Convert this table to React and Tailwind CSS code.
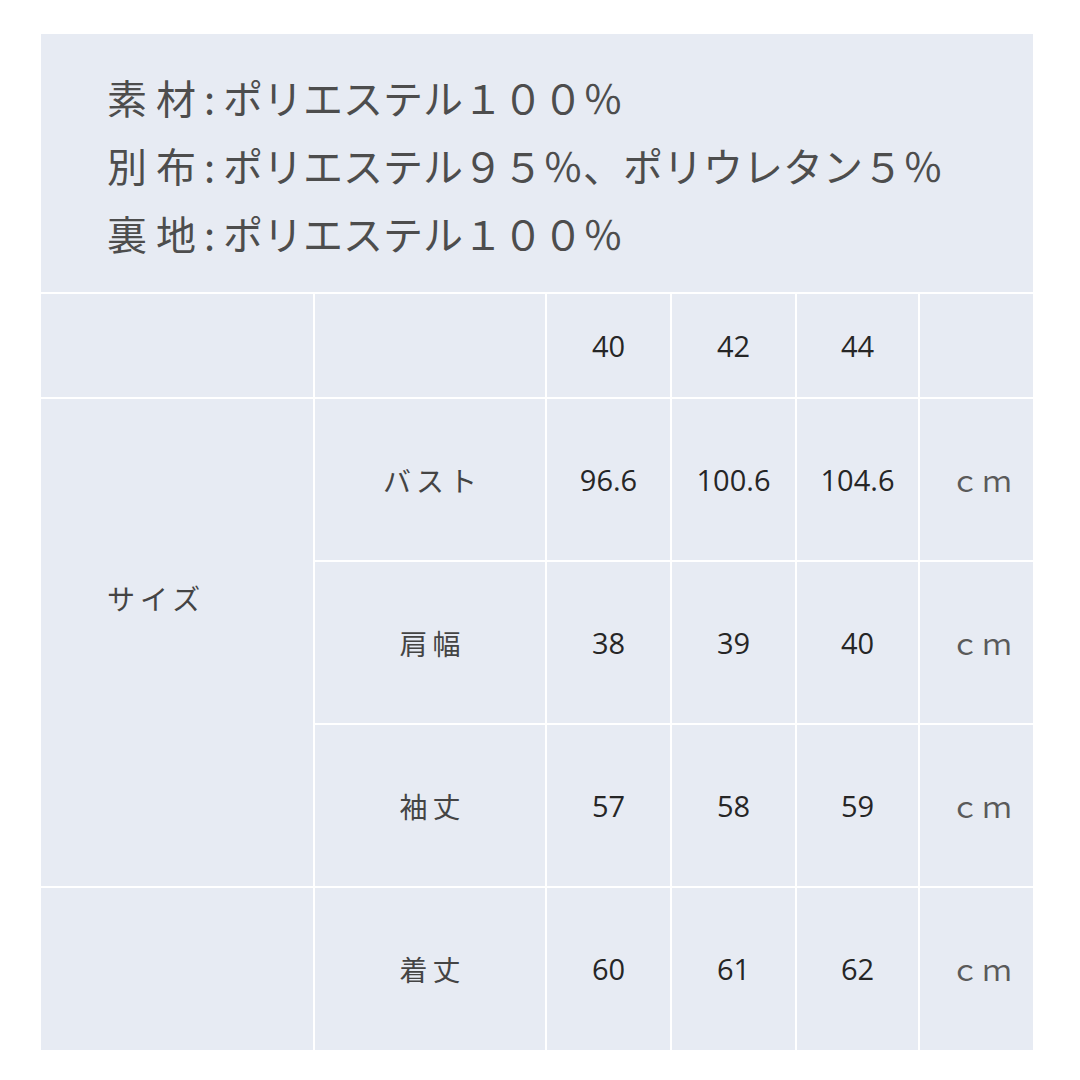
import React from 'react';

const jp = { fontFamily: '"Noto Sans CJK JP", "Noto Sans", sans-serif' };
const num = { fontFamily: '"Open Sans", "Noto Sans CJK JP", sans-serif' };

const rows = [
    { label: 'バスト', values: ['96.6', '100.6', '104.6'] },
    { label: '肩幅', values: ['38', '39', '40'] },
    { label: '袖丈', values: ['57', '58', '59'] },
];

const Cell = ({ children, className = '' }) => (
    <div className={`bg-[#e7ebf3] flex items-center justify-center ${className}`}>{children}</div>
);

const Material = ({ label, text }) => (
    <div className="flex items-center h-[68px] whitespace-nowrap">
        <span className="w-[89px] whitespace-pre">{label}</span>
        <span className="w-[27px] text-center">:</span>
        <span>{text}</span>
    </div>
);

const NumCell = ({ value }) => (
    <Cell>
        <span className="text-[29px] text-[#262626]" style={num}>{value}</span>
    </Cell>
);

const Unit = () => (
    <Cell className="pl-[12px]">
        <span className="text-[29px] text-[#5a5a5a] tracking-[3px]" style={jp}>ｃｍ</span>
    </Cell>
);

const Label = ({ children }) => (
    <span className="text-[28px] text-[#444] tracking-[5px] pl-[5px]" style={jp}>{children}</span>
);

const App = () => {
    return (
        <div className="w-[1080px] h-[1080px] bg-white pt-[34px] pl-[41px]">
            <div className="w-[992px] bg-white flex flex-col gap-[2px]">
                {/* material list */}
                <div className="bg-[#e7ebf3] h-[258px] pt-[29px] pl-[66px] text-[40px] text-[#4d4d4d] leading-none" style={jp}>
                    <Material label="素 材" text="ポリエステル１００％" />
                    <Material label="別 布" text="ポリエステル９５％、ポリウレタン５％" />
                    <Material label="裏 地" text="ポリエステル１００％" />
                </div>

                {/* size table */}
                <div className="grid grid-cols-[272px_230px_123px_123px_121px_113px] grid-rows-[103px_161px_161px_161px_162px] gap-[2px]">
                    <Cell />
                    <Cell />
                    <NumCell value="40" />
                    <NumCell value="42" />
                    <NumCell value="44" />
                    <Cell />

                    <Cell className="row-span-3 !justify-start pl-[66px] pb-[90px]">
                        <span className="text-[28px] text-[#444] tracking-[5px]" style={jp}>サイズ</span>
                    </Cell>
                    {rows.map((r) => (
                        <React.Fragment key={r.label}>
                            <Cell>
                                <Label>{r.label}</Label>
                            </Cell>
                            {r.values.map((v, j) => <NumCell key={j} value={v} />)}
                            <Unit />
                        </React.Fragment>
                    ))}

                    <Cell />
                    <Cell>
                        <Label>着丈</Label>
                    </Cell>
                    <NumCell value="60" />
                    <NumCell value="61" />
                    <NumCell value="62" />
                    <Unit />
                </div>
            </div>
        </div>
    );
};

export default App;
